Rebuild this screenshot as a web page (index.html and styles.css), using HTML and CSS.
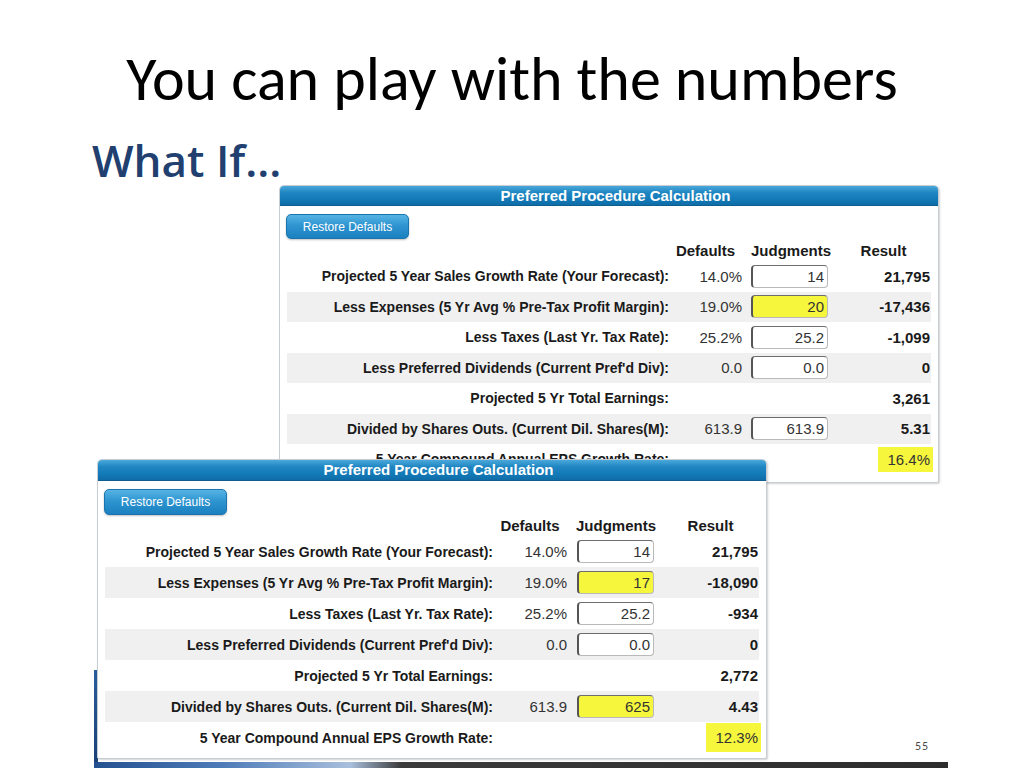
FILE: index.html
```html
<!DOCTYPE html>
<html lang="en">
<head>
<meta charset="utf-8">
<title>You can play with the numbers</title>
<link rel="stylesheet" href="styles.css">
</head>
<body>
<div class="slide">
  <h1 class="title">You can play with the numbers</h1>
  <div class="whatif">What If...</div>

  <div class="frame-left"></div>
  <div class="frame-bottom"></div>

  <section class="calc calc--a">
    <header class="calc__bar">Preferred Procedure Calculation</header>
    <div class="calc__body">
      <div class="calc__tools"><span class="btn">Restore Defaults</span></div>
      <div class="grid">
        <div class="row row--head"><span></span><span class="hd">Defaults</span><span class="hd hd--jud">Judgments</span><span class="hd hd--res">Result</span></div>
        <div class="row"><span class="lbl">Projected 5 Year Sales Growth Rate (Your Forecast):</span><span class="def">14.0%</span><span class="jud"><span class="inp">14</span></span><span class="res">21,795</span></div>
        <div class="row row--alt"><span class="lbl">Less Expenses (5 Yr Avg % Pre-Tax Profit Margin):</span><span class="def">19.0%</span><span class="jud"><span class="inp inp--hl">20</span></span><span class="res">-17,436</span></div>
        <div class="row"><span class="lbl">Less Taxes (Last Yr. Tax Rate):</span><span class="def">25.2%</span><span class="jud"><span class="inp">25.2</span></span><span class="res">-1,099</span></div>
        <div class="row row--alt"><span class="lbl">Less Preferred Dividends (Current Pref'd Div):</span><span class="def">0.0</span><span class="jud"><span class="inp">0.0</span></span><span class="res">0</span></div>
        <div class="row"><span class="lbl">Projected 5 Yr Total Earnings:</span><span class="def"></span><span class="jud"></span><span class="res">3,261</span></div>
        <div class="row row--alt"><span class="lbl">Divided by Shares Outs. (Current Dil. Shares(M):</span><span class="def">613.9</span><span class="jud"><span class="inp">613.9</span></span><span class="res">5.31</span></div>
        <div class="row"><span class="lbl">5 Year Compound Annual EPS Growth Rate:</span><span class="def"></span><span class="jud"></span><span class="res"><span class="hl">16.4%</span></span></div>
      </div>
    </div>
  </section>

  <section class="calc calc--b">
    <header class="calc__bar">Preferred Procedure Calculation</header>
    <div class="calc__body">
      <div class="calc__tools"><span class="btn">Restore Defaults</span></div>
      <div class="grid">
        <div class="row row--head"><span></span><span class="hd">Defaults</span><span class="hd hd--jud">Judgments</span><span class="hd hd--res">Result</span></div>
        <div class="row"><span class="lbl">Projected 5 Year Sales Growth Rate (Your Forecast):</span><span class="def">14.0%</span><span class="jud"><span class="inp">14</span></span><span class="res">21,795</span></div>
        <div class="row row--alt"><span class="lbl">Less Expenses (5 Yr Avg % Pre-Tax Profit Margin):</span><span class="def">19.0%</span><span class="jud"><span class="inp inp--hl">17</span></span><span class="res">-18,090</span></div>
        <div class="row"><span class="lbl">Less Taxes (Last Yr. Tax Rate):</span><span class="def">25.2%</span><span class="jud"><span class="inp">25.2</span></span><span class="res">-934</span></div>
        <div class="row row--alt"><span class="lbl">Less Preferred Dividends (Current Pref'd Div):</span><span class="def">0.0</span><span class="jud"><span class="inp">0.0</span></span><span class="res">0</span></div>
        <div class="row"><span class="lbl">Projected 5 Yr Total Earnings:</span><span class="def"></span><span class="jud"></span><span class="res">2,772</span></div>
        <div class="row row--alt"><span class="lbl">Divided by Shares Outs. (Current Dil. Shares(M):</span><span class="def">613.9</span><span class="jud"><span class="inp inp--hl">625</span></span><span class="res">4.43</span></div>
        <div class="row"><span class="lbl">5 Year Compound Annual EPS Growth Rate:</span><span class="def"></span><span class="jud"></span><span class="res"><span class="hl">12.3%</span></span></div>
      </div>
    </div>
  </section>

  <div class="pagenum">55</div>
</div>
</body>
</html>
```

FILE: styles.css
```css
html, body {
  margin: 0;
  padding: 0;
  background: #ffffff;
}

.slide {
  position: relative;
  width: 1024px;
  height: 768px;
  overflow: hidden;
  background: #ffffff;
  font-family: "Liberation Sans", Arial, sans-serif;
  color: #1a1a1a;
}

.title {
  margin: 0;
  padding-top: 46px;
  height: 66px;
  line-height: 66px;
  text-align: center;
  font-family: Carlito, Lato, "Open Sans", sans-serif;
  font-weight: 400;
  font-size: 62px;
  color: #000000;
}

.whatif {
  margin-top: 23px;
  padding-left: 92px;
  height: 50px;
  line-height: 50px;
  font-family: "Open Sans", "Noto Sans", sans-serif;
  font-weight: 600;
  font-size: 44px;
  color: #21406f;
}

/* decorative frame of the pasted screenshot */
.frame-left {
  position: absolute;
  left: 94px;
  top: 670px;
  width: 4px;
  height: 98px;
  background: linear-gradient(#2b5d9c, #1b3f74);
}

.frame-bottom {
  position: absolute;
  left: 94px;
  top: 762px;
  width: 854px;
  height: 6px;
  background: linear-gradient(to right, #23508e 0%, #4d7bb8 15%, #a9bfdc 30%, #3a3a3a 36%, #2d2d2d 100%);
}

/* calculator panels */
.calc {
  position: absolute;
  box-sizing: border-box;
  background: #ffffff;
  border: 1px solid #c6cdd5;
  border-radius: 5px 5px 2px 2px;
  box-shadow: 1px 1px 2px rgba(0, 0, 0, 0.18);
  overflow: hidden;
}

.calc--a {
  left: 279px;
  top: 185px;
  width: 660px;
  height: 298px;
  --bar: 19px;
  --tools: 8px;
  --c1: 382px;
  --c2: 73px;
  --c3: 86px;
  --c4: 105px;
  --rh: 30.5px;
  --hh: 22px;
  --hlh: 25px;
}

.calc--b {
  left: 97px;
  top: 459px;
  width: 670px;
  height: 300px;
  --bar: 20px;
  --tools: 8px;
  --c1: 388px;
  --c2: 74px;
  --c3: 87px;
  --c4: 107px;
  --rh: 31px;
  --hh: 21px;
  --hlh: 29px;
}

.calc__bar {
  height: var(--bar);
  line-height: var(--bar);
  text-align: center;
  color: #ffffff;
  font-weight: 700;
  font-size: 15px;
  background: linear-gradient(#4aa8da 0%, #1f86c2 35%, #137ab8 70%, #0f6ca6 100%);
  border-bottom: 1px solid #0d5f92;
  padding-left: 13px;
}

.calc__body {
  padding: var(--tools) 7px 0 7px;
}

.calc__tools {
  display: flex;
  height: 25px;
}

.btn {
  display: inline-flex;
  align-items: center;
  justify-content: center;
  box-sizing: border-box;
  width: 123px;
  height: 25px;
  margin-left: -1px;
  border: 1px solid #1a74ad;
  border-radius: 5px;
  background: linear-gradient(#56b4e3 0%, #2f95d1 45%, #1b80bf 100%);
  box-shadow: 0 1px 2px rgba(0, 0, 0, 0.25);
  color: #ffffff;
  font-size: 12px;
}

.calc--b .btn {
  height: 26px;
}

.calc--b .calc__tools {
  height: 26px;
}

.grid {
  display: flex;
  flex-direction: column;
}

.row {
  display: grid;
  grid-template-columns: var(--c1) var(--c2) var(--c3) var(--c4);
  align-items: center;
  height: var(--rh);
}

.row--head {
  height: var(--hh);
}

.row--alt {
  background: #f0f0f0;
}

.hd {
  text-align: center;
  font-weight: 700;
  font-size: 15px;
  color: #1a1a1a;
}

.hd--jud {
  padding-left: 9px;
}

.hd--res {
  padding-left: 6px;
}

.lbl {
  text-align: right;
  font-weight: 700;
  font-size: 14px;
  color: #1a1a1a;
  white-space: nowrap;
}

.def {
  text-align: right;
  font-size: 15px;
  color: #333333;
}

.jud {
  display: flex;
  justify-content: flex-end;
}

.inp {
  box-sizing: border-box;
  width: 77px;
  height: 23px;
  line-height: 21px;
  padding-right: 3px;
  text-align: right;
  font-size: 15px;
  color: #333333;
  background: #ffffff;
  border: 1px solid #b9b9b9;
  border-top-color: #6e6e6e;
  border-left: 2px solid #555555;
  border-radius: 4px;
}

.inp--hl {
  background: #f6f63c;
}

.res {
  text-align: right;
  padding-right: 3px;
  font-weight: 700;
  font-size: 15px;
  color: #1a1a1a;
}

.hl {
  display: inline-block;
  margin-right: -3px;
  padding: 0 3px 0 9px;
  height: var(--hlh);
  line-height: var(--hlh);
  background: #f6f63c;
  font-weight: 400;
  color: #333333;
}

.pagenum {
  position: absolute;
  left: 915px;
  top: 739px;
  font-family: Carlito, Lato, "Open Sans", sans-serif;
  font-size: 12px;
  letter-spacing: 1px;
  color: #4a4a4a;
}
```
